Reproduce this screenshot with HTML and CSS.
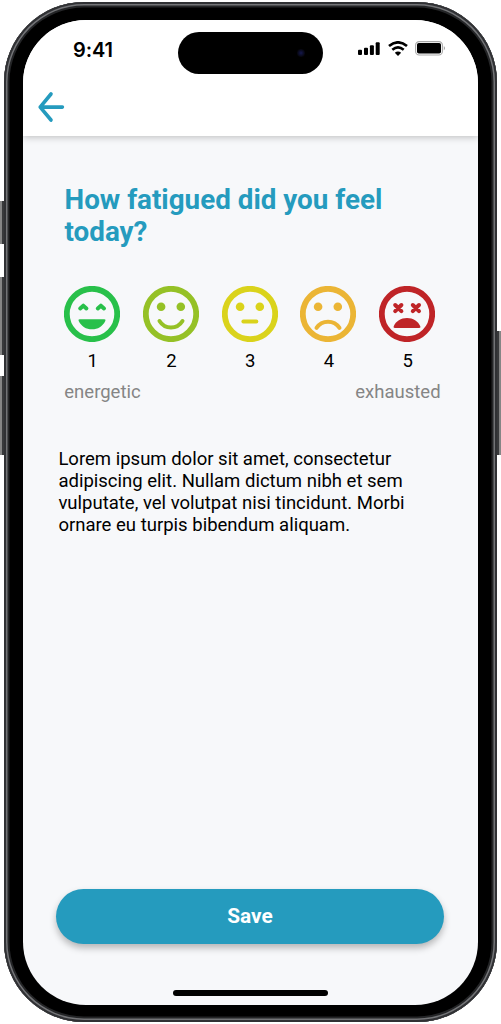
FILE: index.html
```
<!DOCTYPE html>
<html lang="en">
<head>
<meta charset="utf-8">
<title>Fatigue check-in</title>
<link rel="stylesheet" href="styles.css">
</head>
<body>
<div class="phone">
  <i class="side action"></i><i class="side vol-up"></i><i class="side vol-down"></i><i class="side power"></i>
  <div class="screen">
    <header class="header">
      <div class="status">
        <span class="time">9:41</span>
        <div class="island"><i class="lens"></i></div>
        <div class="indicators">
          <svg width="22" height="14" viewBox="0 0 22 14"><rect x="0" y="7.7" width="4" height="5.3" rx="1"/><rect x="6" y="5.7" width="4" height="7.3" rx="1"/><rect x="11.9" y="3.2" width="4" height="9.8" rx="1"/><rect x="17.7" y="0.3" width="4" height="12.7" rx="1"/></svg>
          <svg class="wifi" width="20" height="15" viewBox="0 0 20 15"><path d="M1 5.1Q10-2.5 19 5.1M4.3 8.7Q10 4 15.7 8.7" fill="none" stroke="#000" stroke-width="2.6"/><path d="M6.8 11.8Q10 9.3 13.2 11.8L10 15Z"/></svg>
          <svg class="battery" width="32" height="15" viewBox="0 0 32 15"><rect x=".6" y=".6" width="26.8" height="13.4" rx="3.6" fill="none" stroke="#a8a8a8" stroke-width="1.1"/><rect x="2" y="2" width="24" height="10.6" rx="1.8"/><path d="M28.8 5Q31.2 7.2 28.8 9.5Z" fill="#a0a0a0"/></svg>
        </div>
      </div>
      <svg class="back" width="28" height="32" viewBox="0 0 28 32"><path d="M14 3L3.2 16.1 14 29M3.2 16.1H25.4"/></svg>
    </header>
    <main class="content">
      <h1 class="question">How fatigued did you feel today?</h1>
      <div class="scale">
        <div class="choice"><svg class="face great" viewBox="0 0 56 56"><circle class="ring" cx="28" cy="28" r="25.2"/><path class="line" d="M16.2 22.4L19.3 19.7 22.4 22.4M33.8 22.4L36.9 19.7 40 22.4"/><path d="M15.6 33.2H40.4Q42.2 33.2 41.3 34.9C38.6 40.3 33.9 43.3 28 43.3S17.4 40.3 14.7 34.9Q13.8 33.2 15.6 33.2Z"/></svg><span>1</span></div>
        <div class="choice"><svg class="face good" viewBox="0 0 56 56"><circle class="ring" cx="28" cy="28" r="25.2"/><circle cx="18.1" cy="20.8" r="4.3"/><circle cx="37.8" cy="20.8" r="4.3"/><path class="line" d="M16.5 35C22 43.8 34 43.8 39.5 35"/></svg><span>2</span></div>
        <div class="choice"><svg class="face okay" viewBox="0 0 56 56"><circle class="ring" cx="28" cy="28" r="25.2"/><circle cx="18.1" cy="20.8" r="4.3"/><circle cx="37.8" cy="20.8" r="4.3"/><path class="line" d="M21.4 35.5H34.3"/></svg><span>3</span></div>
        <div class="choice"><svg class="face low" viewBox="0 0 56 56"><circle class="ring" cx="28" cy="28" r="25.2"/><circle cx="18.1" cy="20.8" r="4.3"/><circle cx="37.8" cy="20.8" r="4.3"/><path class="line" d="M16.5 41.9C22 33.7 34 33.7 39.5 41.9"/></svg><span>4</span></div>
        <div class="choice"><svg class="face bad" viewBox="0 0 56 56"><circle class="ring" cx="28" cy="28" r="25.2"/><path class="line" d="M16.2 19L22.4 25.2M22.4 19L16.2 25.2M33.8 19L40 25.2M40 19L33.8 25.2"/><path d="M15.8 41.9H40.2Q42 41.9 41.3 40.3C39.2 35.2 34 32 28 32S16.8 35.2 14.7 40.3Q14 41.9 15.8 41.9Z"/></svg><span>5</span></div>
      </div>
      <div class="ends"><span>energetic</span><span>exhausted</span></div>
      <p class="note">Lorem ipsum dolor sit amet, consectetur adipiscing elit. Nullam dictum nibh et sem vulputate, vel volutpat nisi tincidunt. Morbi ornare eu turpis bibendum aliquam.</p>
    </main>
    <footer class="footer"><button class="save">Save</button><i class="home"></i></footer>
  </div>
</div>
</body>
</html>
```
FILE: styles.css
```
*{box-sizing:border-box}
body{margin:0;height:1024px;padding:2px 4px;background:#fff;font-family:Roboto,sans-serif;overflow:hidden}
.phone{position:relative;width:493px;height:1020px;padding:17.5px 19px;border-radius:80px;background:#000;box-shadow:inset 0 0 0 2px #303134,inset 0 0 0 3.5px #737477,inset 0 0 0 5.5px #242527}
.side{position:absolute;width:4px;background:linear-gradient(90deg,#858585 50%,#38393b 50%)}
.action{left:-4px;top:199px;height:43px}
.vol-up{left:-4px;top:275px;height:78px}
.vol-down{left:-4px;top:374px;height:79px}
.power{right:-4px;top:329px;height:124px;transform:scaleX(-1)}
.screen{display:flex;flex-direction:column;height:985px;border-radius:63px;background:#f7f8fa;overflow:hidden}
.header{height:116.5px;background:#fff;box-shadow:0 1px 7px rgba(0,0,0,.25);flex:none}
.status{display:grid;grid-template-columns:155px 145px 1fr;padding-top:12.5px;height:68px}
.time{font:600 20px/24px Inter,sans-serif;padding:6px 0 0 50px;letter-spacing:-.1px}
.island{height:42px;border-radius:21px;background:#000;display:flex;align-items:center;justify-content:flex-end;padding-right:18px}
.lens{width:8px;height:8px;border-radius:50%;background:radial-gradient(#15184d,#05050c 70%)}
.indicators{display:flex;align-items:flex-start;padding:9.5px 0 0 35px}
.wifi{margin-left:8px;margin-top:-1px}
.battery{margin-left:7px;margin-top:-1px}
.back{display:block;margin:3px 0 0 14px;fill:none;stroke:#259bbe;stroke-width:3.6;stroke-linecap:round;stroke-linejoin:round}
.content{flex:1;padding:48px 35px 0}
.question{margin:0 0 37px 6.5px;font-size:27.8px;line-height:32.4px;font-weight:700;color:#259bbe;width:350px}
.scale{display:flex;justify-content:space-between;margin:0 8px 0 6px}
.choice{display:flex;flex-direction:column;align-items:center;font-size:18.5px;line-height:22px;gap:8px}
.choice span{padding-left:1.2px}
.face{width:56px;height:56px;fill:currentColor}
.ring,.line{fill:none;stroke:currentColor}
.ring{stroke-width:5.8}
.line{stroke-width:4;stroke-linecap:round;stroke-linejoin:round}
.great{color:#28c04a}.good{color:#95c126}.okay{color:#dad31b}.low{color:#ebb535}.bad{color:#bf2427}
.ends{display:flex;justify-content:space-between;margin:9.6px 2.4px 0 6.3px;font-size:18.5px;line-height:22px;color:#858585}
.note{margin:45px 0 0 .4px;font-size:18.53px;line-height:22px;width:365px}
.footer{display:flex;flex-direction:column;align-items:center;height:116px}
.save{width:388px;height:55.5px;border:0;border-radius:28px;background:#259bbe;color:#fff;font:700 20.8px/24px Roboto,sans-serif;box-shadow:0 4px 7px rgba(0,0,0,.27);flex:none;margin-right:1px}
.home{width:155px;height:6px;border-radius:3px;background:#000;margin-top:45.5px}
```
